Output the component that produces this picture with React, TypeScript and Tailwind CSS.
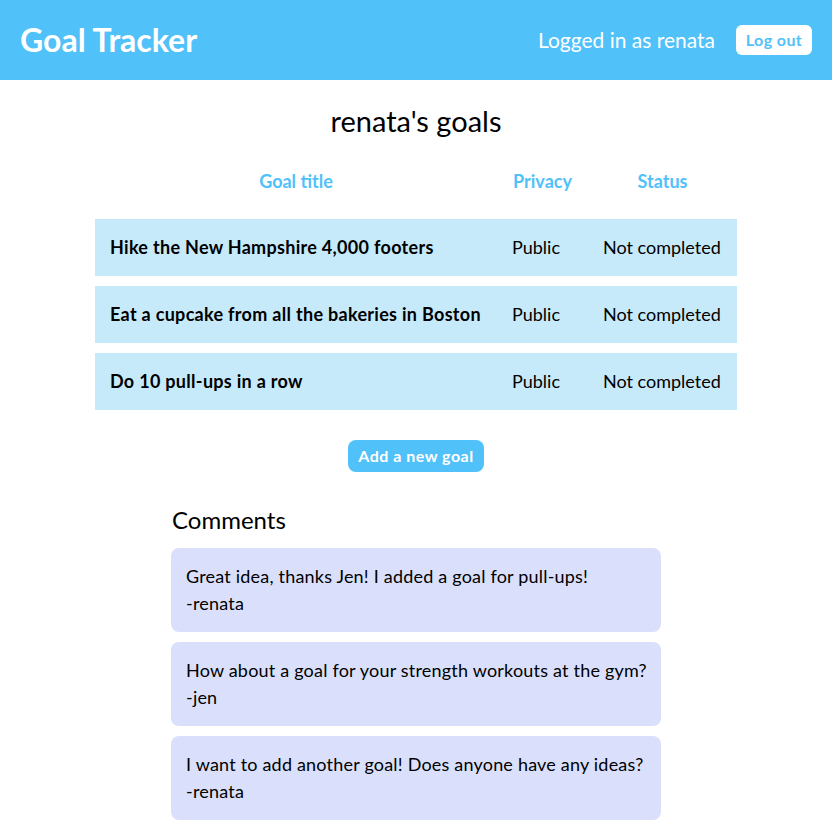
export default function App() {
  const goals = [
    "Hike the New Hampshire 4,000 footers",
    "Eat a cupcake from all the bakeries in Boston",
    "Do 10 pull-ups in a row",
  ];
  const comments = [
    ["Great idea, thanks Jen! I added a goal for pull-ups!", "-renata"],
    ["How about a goal for your strength workouts at the gym?", "-jen"],
    ["I want to add another goal! Does anyone have any ideas?", "-renata"],
  ];
  return (
    <div className="min-h-[832px] bg-white text-black" style={{ fontFamily: "Lato, 'Noto Sans', sans-serif" }}>
      <header className="h-[80px] bg-[#50c1f9] flex items-center justify-between pl-[20px] pr-[20px]">
        <div className="text-white font-bold text-[32px] leading-[40px]">Goal Tracker</div>
        <div className="flex items-center gap-[21px]">
          <span className="text-white text-[21px] leading-[28px]">Logged in as renata</span>
          <button className="bg-white text-[#50c1f9] font-bold text-[16px] tracking-[0.4px] rounded-md w-[76px] h-[30px]">Log out</button>
        </div>
      </header>
      <h1 className="text-center text-[29px] mt-[24px] leading-[34px]">renata's goals</h1>
      <div className="flex justify-center mt-[5px]">
        <table className="border-separate border-spacing-x-0 border-spacing-y-[10px] text-[18px] leading-[27px]">
          <thead>
            <tr>
              <th className="w-[402px] pt-[15px] pb-[14px] text-[#50c1f9] font-bold">Goal title</th>
              <th className="w-[91px] pt-[15px] pb-[14px] text-[#50c1f9] font-bold">Privacy</th>
              <th className="w-[149px] pt-[15px] pb-[14px] text-[#50c1f9] font-bold">Status</th>
            </tr>
          </thead>
          <tbody>
            {goals.map((g) => (
              <tr key={g} className="bg-[#c7eafb]">
                <td className="px-[15px] py-[15px] font-bold tracking-[0.3px]">{g}</td>
                <td className="px-[15px] py-[15px]">Public</td>
                <td className="px-[15px] py-[15px] whitespace-nowrap">Not completed</td>
              </tr>
            ))}
          </tbody>
        </table>
      </div>
      <div className="flex justify-center mt-[20px]">
        <button className="bg-[#50c1f9] text-white font-bold text-[16px] tracking-[0.5px] rounded-lg w-[136px] h-[32px]">Add a new goal</button>
      </div>
      <div className="w-[490px] mx-auto mt-[33px]">
        <h2 className="text-[24px] leading-[30px] pl-[1px]">Comments</h2>
        <div className="mt-[13px] flex flex-col gap-[10px]">
          {comments.map(([t, a], i) => (
            <div key={i} className="bg-[#dae0fc] rounded-lg p-[15px] text-[18px] leading-[27px] tracking-[0.2px]">
              <div className="whitespace-nowrap">{t}</div>
              <div>{a}</div>
            </div>
          ))}
        </div>
      </div>
    </div>
  );
}
